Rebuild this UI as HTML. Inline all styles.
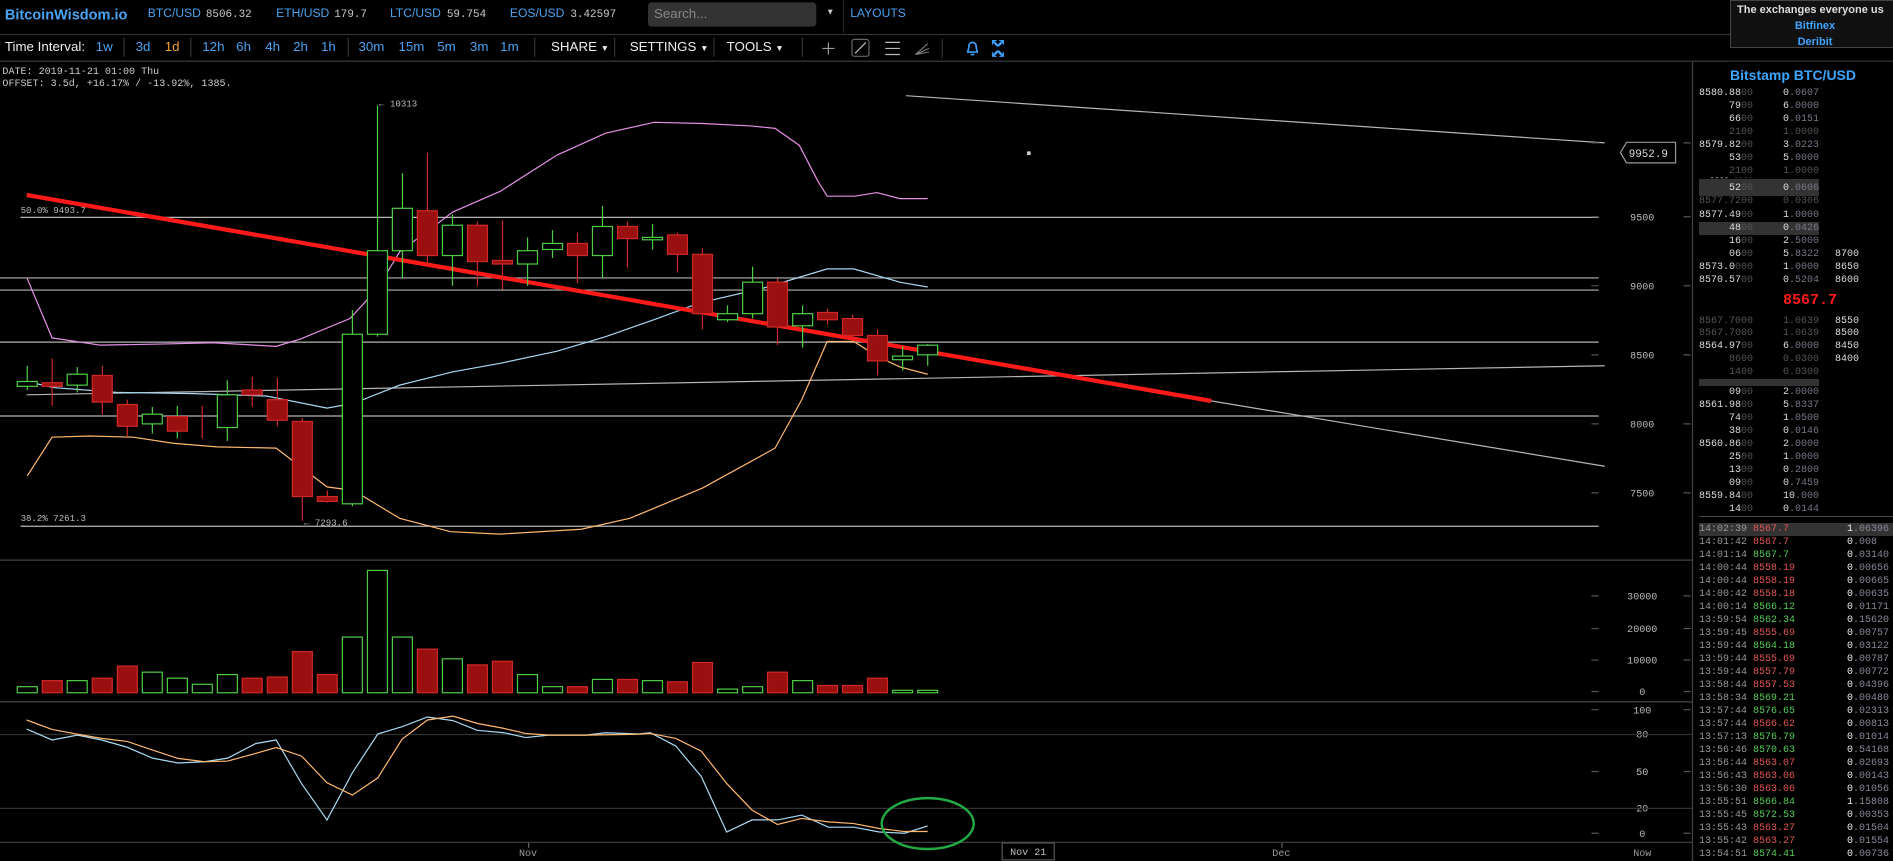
<!DOCTYPE html>
<html><head><meta charset="utf-8">
<style>
*{margin:0;padding:0;box-sizing:border-box}
html,body{width:1893px;height:861px;background:#000;overflow:hidden}
body{position:relative;font-family:"Liberation Sans",sans-serif;color:#ccc}
#L{position:absolute;left:0;top:0;width:1563px;height:711px;transform:scale(1.2111);transform-origin:0 0}
.a{position:absolute;white-space:nowrap}
.tb{font-size:11px;color:#4aa3f0;top:33px}
.mono{font-family:"Liberation Mono",monospace}
.sep{position:absolute;top:31px;width:1px;height:16px;background:#333}
#R{position:absolute;left:0;top:0;width:1893px;height:861px}
.r{position:absolute;font-family:"Liberation Mono",monospace;font-size:10px;line-height:13px;color:#ddd;white-space:pre;height:13px}
.p1{left:1699px;width:54px;text-align:right}
.p2{left:1753px;width:66px;text-align:right}
.p3{left:1835px}
.d{color:#555}.g{color:#778}
.tr{position:absolute;left:1699px;font-family:"Liberation Mono",monospace;font-size:10px;line-height:13px;white-space:pre;width:194px;height:13px}
.tr .t{color:#999;position:absolute;left:0}.tr .p{position:absolute;left:54px}.tr .q{position:absolute;left:148px;color:#889}
.rd{color:#e05555}.gr{color:#55cc55}
</style></head><body>
<div id="L">
<div class="a" style="left:4px;top:5px;font-size:12px;font-weight:bold;color:#4aa3f0">BitcoinWisdom.io</div>
<div class="a" style="left:122px;top:6px;font-size:10px;color:#4aa3f0">BTC/USD</div>
<div class="a mono" style="left:170px;top:7px;font-size:9px;color:#ccc">8506.32</div>
<div class="a" style="left:228px;top:6px;font-size:10px;color:#4aa3f0">ETH/USD</div>
<div class="a mono" style="left:276px;top:7px;font-size:9px;color:#ccc">179.7</div>
<div class="a" style="left:322px;top:6px;font-size:10px;color:#4aa3f0">LTC/USD</div>
<div class="a mono" style="left:369px;top:7px;font-size:9px;color:#ccc">59.754</div>
<div class="a" style="left:421px;top:6px;font-size:10px;color:#4aa3f0">EOS/USD</div>
<div class="a mono" style="left:471px;top:7px;font-size:9px;color:#ccc">3.42597</div>
<div class="a" style="left:535px;top:2px;width:139px;height:20px;background:#333;border-radius:3px;font-size:11px;color:#888;padding:4px 0 0 5px">Search...</div>
<div class="a" style="left:682px;top:7px;font-size:7px;color:#ccc">▼</div>
<div class="a" style="left:696px;top:0;width:1px;height:27px;background:#222"></div>
<div class="a" style="left:702px;top:6px;font-size:10px;color:#4aa3f0">LAYOUTS</div>
<div class="a" style="left:0;top:28px;width:1430px;height:1px;background:#333"></div>
<div class="a tb" style="left:4px;color:#eee">Time Interval:</div>
<div class="a tb" style="left:79px">1w</div>
<div class="sep" style="left:102px"></div>
<div class="a tb" style="left:112px">3d</div>
<div class="a tb" style="left:136px;color:#f0a030">1d</div>
<div class="sep" style="left:157px"></div>
<div class="a tb" style="left:167px">12h</div>
<div class="a tb" style="left:195px">6h</div>
<div class="a tb" style="left:219px">4h</div>
<div class="a tb" style="left:242px">2h</div>
<div class="a tb" style="left:265px">1h</div>
<div class="sep" style="left:287px"></div>
<div class="a tb" style="left:296px">30m</div>
<div class="a tb" style="left:329px">15m</div>
<div class="a tb" style="left:361px">5m</div>
<div class="a tb" style="left:388px">3m</div>
<div class="a tb" style="left:413px">1m</div>
<div class="sep" style="left:441px"></div>
<div class="a tb" style="left:455px;color:#eee">SHARE <span style="font-size:7px">▼</span></div>
<div class="sep" style="left:507px"></div>
<div class="a tb" style="left:520px;color:#eee">SETTINGS <span style="font-size:7px">▼</span></div>
<div class="sep" style="left:589px"></div>
<div class="a tb" style="left:600px;color:#eee">TOOLS <span style="font-size:7px">▼</span></div>
<div class="sep" style="left:662px"></div>
<svg class="a" style="left:670px;top:30px" width="170" height="20" viewBox="0 0 170 20">
<path d="M14 5v10M9 10h10" stroke="#999" stroke-width="1"/>
<rect x="33.5" y="2.5" width="14" height="14" rx="2" fill="none" stroke="#666"/>
<path d="M36 14l9-9" stroke="#bbb"/>
<path d="M61 5h12M61 10h12M61 15h12" stroke="#bbb"/>
<path d="M86 15l10-9M86 15l11-5M86 15l11-2" stroke="#888" stroke-width="0.8"/>
<path d="M108 2v16" stroke="#333"/>
<path d="M129 13c0-1 1-2 1-5a3 3 0 016 0c0 3 1 4 1 5zM131.5 15h3" stroke="#3a9cf5" fill="none" stroke-width="1.4"/>
<path d="M150 4l4 4M158 4l-4 4M150 16l4-4M158 16l-4-4" stroke="#3a9cf5" stroke-width="2"/>
<path d="M149 3h4v1h-3v3h-1zM159 3h-4v1h3v3h1zM149 17h4v-1h-3v-3h-1zM159 17h-4v-1h3v-3h1z" fill="#3a9cf5"/>
</svg>
<div class="a" style="left:0;top:50px;width:1563px;height:1px;background:#333"></div>
<div class="a mono" style="left:2px;top:55px;font-size:8.3px;color:#ccc">DATE: 2019-11-21 01:00 Thu</div>
<div class="a mono" style="left:2px;top:65px;font-size:8.3px;color:#ccc">OFFSET: 3.5d, +16.17% / -13.92%, 1385.</div>

<svg class="a" style="left:0;top:0" width="1563" height="711" viewBox="0 0 1563 711">
<g fill="none" stroke="#b5b5b5" stroke-width="1">
<path d="M17 179.5H1320"/>
<path d="M0 229.5H1320"/>
<path d="M0 239.5H1320"/>
<path d="M0 282.5H1320"/>
<path d="M0 343.5H1320"/>
<path d="M17 434.5H1320"/>
<path d="M22 326L1325 302"/>
<path d="M748 79L1325 118"/>
<path d="M1000 331L1325 385"/>
</g>
<g font-family="Liberation Mono,monospace" font-size="7.5" fill="#bbb">
<text x="17" y="176">50.0% 9493.7</text>
<text x="17" y="430">38.2% 7261.3</text>
<text x="251" y="434">← 7293.6</text>
<text x="313" y="88">← 10313</text>
</g>
<rect x="848" y="125" width="3" height="3" fill="#ccc"/>
<polyline fill="none" stroke="#e58fe5" stroke-width="1" points="22.5,230 43,279 83,285 137,284 176,283 228,286 248,280 289,263 311,239 330,208 374,175 413,158 460,128 500,110 540,101 580,102 620,104 640,106 660,120 675,149 683,162 706,162 724,159 743,164 766,164"/>
<polyline fill="none" stroke="#a8d8f0" stroke-width="1" points="22.5,315 44,320 96,324 160,325 220,327 270,337 292,333 330,318 374,307 413,300 460,290 500,278 540,264 578,250 630,238 683,222 705,222 743,233 766,237"/>
<polyline fill="none" stroke="#ffb870" stroke-width="1" points="22.5,393 43,361 74,360 110,361 143,366 179,369 228,370 270,402 292,405 330,428 372,439 413,441 480,437 520,428 580,403 640,370 662,330 683,282 705,282 724,294 743,303 766,309"/>
<path d="M22 161L1000 331" stroke="#ff1a1a" stroke-width="3.5"/>
<g stroke-width="1">
<g stroke="#4dcc44" fill="#000">
<path d="M22.5 302V322M63.8 303V324M125.8 336V358M146.4 335V362M187.7 314V364M291 256V418M311.7 87V278M332.3 143V230M373.6 177V236M435.6 196V236M456.2 190V213M497.5 170V230M538.8 185V206M600.7 252V266M621.4 220V263M662.7 252V287M745.3 286V306M766 284V302"/>
<rect x="14.25" y="315" width="16.5" height="4"/>
<rect x="55.5" y="309" width="16.5" height="9"/>
<rect x="117.5" y="342" width="16.5" height="8"/>
<path d="M138 354.5H155"/>
<rect x="179.5" y="326" width="16.5" height="27"/>
<rect x="282.7" y="276" width="16.5" height="140"/>
<rect x="303.4" y="207" width="16.5" height="69"/>
<rect x="324" y="172" width="16.5" height="35"/>
<rect x="365.3" y="186" width="16.5" height="25"/>
<rect x="427.3" y="207" width="16.5" height="11"/>
<rect x="448" y="201" width="16.5" height="5"/>
<rect x="489.2" y="187" width="16.5" height="24"/>
<rect x="530.5" y="196" width="16.5" height="2"/>
<rect x="592.5" y="259" width="16.5" height="5"/>
<rect x="613.2" y="233" width="16.5" height="26"/>
<rect x="654.5" y="259" width="16.5" height="10"/>
<rect x="737" y="294" width="16.5" height="3"/>
<rect x="757.7" y="285" width="16.5" height="8"/>
</g>
<g stroke="#d02828" fill="#9a1010">
<path d="M43.1 296V335M84.5 302V342M105.1 330V360M167 335V362M208.3 311V336M229 312V352M249.6 345V430M270.3 405V415M352.9 126V217M394.2 183V236M414.9 182V239M476.8 192V234M518.1 183V221M559.4 192V225M580 205V272M642 230V285M683.3 255V268M704 260V280M724.6 272V310"/>
<rect x="34.9" y="316" width="16.5" height="3"/>
<rect x="76.2" y="310" width="16.5" height="22"/>
<rect x="96.9" y="334" width="16.5" height="18"/>
<rect x="138.2" y="344" width="16.5" height="12"/>
<rect x="200" y="322" width="16.5" height="4"/>
<rect x="220.7" y="330" width="16.5" height="17"/>
<rect x="241.4" y="348" width="16.5" height="62"/>
<rect x="262" y="410" width="16.5" height="4"/>
<rect x="344.6" y="174" width="16.5" height="37"/>
<rect x="386" y="186" width="16.5" height="30"/>
<rect x="406.6" y="215" width="16.5" height="3"/>
<rect x="468.5" y="201" width="16.5" height="10"/>
<rect x="509.9" y="187" width="16.5" height="10"/>
<rect x="551.1" y="194" width="16.5" height="16"/>
<rect x="571.8" y="210" width="16.5" height="49"/>
<rect x="633.7" y="233" width="16.5" height="37"/>
<rect x="675" y="258" width="16.5" height="6"/>
<rect x="695.7" y="263" width="16.5" height="14"/>
<rect x="716.3" y="277" width="16.5" height="21"/>
</g>
</g>
<g font-family="Liberation Mono,monospace" font-size="8.3" fill="#bbb" text-anchor="middle">
<text x="1356" y="182">9500</text><text x="1356" y="239">9000</text><text x="1356" y="296">8500</text><text x="1356" y="353">8000</text><text x="1356" y="410">7500</text>
<text x="1356" y="495">30000</text><text x="1356" y="522">20000</text><text x="1356" y="548">10000</text><text x="1356" y="574">0</text>
<text x="1356" y="589">100</text><text x="1356" y="609">80</text><text x="1356" y="640">50</text><text x="1356" y="670">20</text><text x="1356" y="691">0</text>
</g>
<g stroke="#555"><path d="M1314 179h6M1390 179h6M1314 236h6M1390 236h6M1314 293h6M1390 293h6M1314 350h6M1390 350h6M1314 407h6M1390 407h6M1314 118h6M1390 118h6M1314 492h6M1390 492h6M1314 519h6M1390 519h6M1314 545h6M1390 545h6M1314 571h6M1390 571h6M1314 586h6M1390 586h6M1314 637h6M1390 637h6M1314 688h6M1390 688h6"/></g>
<path d="M1343 117.5H1383.5V134.5H1343L1338 126Z" fill="#000" stroke="#999"/>
<text x="1361" y="129.5" font-family="Liberation Mono,monospace" font-size="9" fill="#ddd" text-anchor="middle">9952.9</text>
<path d="M0 462.5H1397M0 579.5H1397M0 695.5H1397M1397.5 51V711" stroke="#444"/>
<path d="M0 606.5H1397M0 667.5H1397" stroke="#333"/>
<g stroke="#4dcc44" fill="#000">
<rect x="14.25" y="567" width="16.5" height="5"/><rect x="55.5" y="562" width="16.5" height="10"/><rect x="117.5" y="555" width="16.5" height="17"/><rect x="138.2" y="560" width="16.5" height="12"/><rect x="158.8" y="565" width="16.5" height="7"/><rect x="179.5" y="557" width="16.5" height="15"/><rect x="282.7" y="526" width="16.5" height="46"/><rect x="303.4" y="471" width="16.5" height="101"/><rect x="324" y="526" width="16.5" height="46"/><rect x="365.3" y="544" width="16.5" height="28"/><rect x="427.3" y="557" width="16.5" height="15"/><rect x="448" y="567" width="16.5" height="5"/><rect x="489.2" y="561" width="16.5" height="11"/><rect x="530.5" y="562" width="16.5" height="10"/><rect x="592.5" y="569" width="16.5" height="3"/><rect x="613.2" y="567" width="16.5" height="5"/><rect x="654.5" y="562" width="16.5" height="10"/><rect x="737" y="570" width="16.5" height="2"/><rect x="757.7" y="570" width="16.5" height="2"/>
</g>
<g stroke="#d02828" fill="#9a1010">
<rect x="34.9" y="562" width="16.5" height="10"/><rect x="76.2" y="560" width="16.5" height="12"/><rect x="96.9" y="550" width="16.5" height="22"/><rect x="200" y="560" width="16.5" height="12"/><rect x="220.7" y="559" width="16.5" height="13"/><rect x="241.4" y="538" width="16.5" height="34"/><rect x="262" y="557" width="16.5" height="15"/><rect x="344.6" y="536" width="16.5" height="36"/><rect x="386" y="549" width="16.5" height="23"/><rect x="406.6" y="546" width="16.5" height="26"/><rect x="468.5" y="567" width="16.5" height="5"/><rect x="509.9" y="561" width="16.5" height="11"/><rect x="551.1" y="563" width="16.5" height="9"/><rect x="571.8" y="547" width="16.5" height="25"/><rect x="633.7" y="555" width="16.5" height="17"/><rect x="675" y="566" width="16.5" height="6"/><rect x="695.7" y="566" width="16.5" height="6"/><rect x="716.3" y="560" width="16.5" height="12"/>
</g>
<polyline fill="none" stroke="#a8d8f0" points="22,602 43,611 64,607 84,611 105,617 126,626 147,630 169,629 188,626 211,614 228,611 249,647 270,677 291,638 312,606 332,600 353,592 374,595 394,603 416,605 434,609 453,607 484,607 500,605 527,606 537,605 558,616 579,641 600,687 621,677 642,677 662,673 684,683 705,683 726,687 747,688 766,682"/>
<polyline fill="none" stroke="#ffb870" points="22,594.5 43,602.3 64,606.2 84,609.7 105,612.2 126,619.3 147,626.2 169,629 188,628.4 211,622.1 228,617.2 249,624.3 270,646.3 291,656.5 312,642.2 332,610.3 353,594.5 374,591.3 394,597.3 416,601.4 434,605.6 453,607 484,607 527,606.2 537,605.6 558,609.7 579,620.2 600,646.9 621,668.9 642,680.8 662,675.8 684,678.6 705,680 726,684.1 747,686.6 766,686.6"/>
<ellipse cx="766" cy="680" rx="38" ry="21" fill="none" stroke="#22aa44" stroke-width="2"/>
<g font-family="Liberation Mono,monospace" font-size="8.3" fill="#999" text-anchor="middle">
<text x="436" y="707">Nov</text><text x="1058" y="707">Dec</text><text x="1356" y="707">Now</text>
</g>
<path d="M436.5 696v4M1058.5 696v4" stroke="#666"/>
<rect x="827.5" y="696" width="43" height="14" fill="#000" stroke="#555"/>
<text x="849" y="706" font-family="Liberation Mono,monospace" font-size="8.3" fill="#bbb" text-anchor="middle">Nov 21</text>
</svg>
</div>

<div id="R">
<div style="position:absolute;left:1730px;top:0;width:170px;height:48px;background:#111;border:1px solid #444;text-align:center;font-weight:bold;font-size:11px;line-height:16px;padding-top:1px;white-space:nowrap;overflow:hidden">
<div style="color:#ddd;text-align:left;padding-left:6px">The exchanges everyone us</div><div style="color:#3ea5ff">Bitfinex</div><div style="color:#3ea5ff">Deribit</div></div>
<div style="position:absolute;left:0;top:61px;width:1730px;height:1px;background:#333"></div>
<div style="position:absolute;left:1692px;top:62px;width:1px;height:799px;background:#444"></div>
<div style="position:absolute;left:1730px;top:67px;font-weight:bold;font-size:14px;color:#3ea5ff;white-space:nowrap">Bitstamp BTC/USD</div>
<div style="position:absolute;left:1699px;top:179px;width:120px;height:17px;background:#333"></div>
<div style="position:absolute;left:1699px;top:222px;width:120px;height:13px;background:#333"></div>
<div style="position:absolute;left:1699px;top:379px;width:120px;height:7px;background:#333"></div>
<div style="position:absolute;left:1692px;top:88px;width:201px;height:426px;overflow:hidden">
<div style="position:absolute;left:-1692px;top:-88px;width:1893px;height:600px">
<div class="r p1" style="top:87px">8580.88<span class="d">00</span></div><div class="r p2" style="top:87px">0<span class="g">.0607</span></div>
<div class="r p1" style="top:100px">79<span class="d">00</span></div><div class="r p2" style="top:100px">6<span class="g">.0000</span></div>
<div class="r p1" style="top:113px">66<span class="d">00</span></div><div class="r p2" style="top:113px">0<span class="g">.0151</span></div>
<div class="r p1 d" style="top:126px">2100</div><div class="r p2 d" style="top:126px">1.0000</div>
<div class="r p1" style="top:139px">8579.82<span class="d">00</span></div><div class="r p2" style="top:139px">3<span class="g">.0223</span></div>
<div class="r p1" style="top:152px">53<span class="d">00</span></div><div class="r p2" style="top:152px">5<span class="g">.0000</span></div>
<div class="r p1 d" style="top:165px">2100</div><div class="r p2 d" style="top:165px">1.0000</div>
<div class="r p1" style="top:175px;font-size:8px;height:8px;line-height:8px;overflow:hidden">----&nbsp;<span class="d">----</span></div>
<div class="r p1" style="top:182px">52<span class="d">00</span></div><div class="r p2" style="top:182px">0<span class="g">.0606</span></div>
<div class="r p1 d" style="top:195px">8577.7200</div><div class="r p2 d" style="top:195px">0.0306</div>
<div class="r p1" style="top:209px">8577.49<span class="d">00</span></div><div class="r p2" style="top:209px">1<span class="g">.0000</span></div>
<div class="r p1" style="top:222px">48<span class="d">00</span></div><div class="r p2" style="top:222px">0<span class="g">.0426</span></div>
<div class="r p1" style="top:235px">16<span class="d">00</span></div><div class="r p2" style="top:235px">2<span class="g">.5000</span></div>
<div class="r p1" style="top:248px">06<span class="d">00</span></div><div class="r p2" style="top:248px">5<span class="g">.8322</span></div><div class="r p3" style="top:248px">8700</div>
<div class="r p1" style="top:261px">8573.0<span class="d">000</span></div><div class="r p2" style="top:261px">1<span class="g">.0000</span></div><div class="r p3" style="top:261px">8650</div>
<div class="r p1" style="top:274px">8570.57<span class="d">00</span></div><div class="r p2" style="top:274px">0<span class="g">.5204</span></div><div class="r p3" style="top:274px">8600</div>
<div style="position:absolute;left:1783px;top:292px;font-family:'Liberation Mono',monospace;font-weight:bold;font-size:15px;color:#ff1a1a">8567.7</div>
<div class="r p1 d" style="top:315px">8567.7000</div><div class="r p2 d" style="top:315px">1.0639</div><div class="r p3" style="top:315px">8550</div>
<div class="r p1 d" style="top:327px">8567.7000</div><div class="r p2 d" style="top:327px">1.0639</div><div class="r p3" style="top:327px">8500</div>
<div class="r p1" style="top:340px">8564.97<span class="d">00</span></div><div class="r p2" style="top:340px">6<span class="g">.0000</span></div><div class="r p3" style="top:340px">8450</div>
<div class="r p1 d" style="top:353px">8600</div><div class="r p2 d" style="top:353px">0.0300</div><div class="r p3" style="top:353px">8400</div>
<div class="r p1 d" style="top:366px">1400</div><div class="r p2 d" style="top:366px">0.0300</div>
<div class="r p1" style="top:386px">09<span class="d">00</span></div><div class="r p2" style="top:386px">2<span class="g">.0000</span></div>
<div class="r p1" style="top:399px">8561.98<span class="d">00</span></div><div class="r p2" style="top:399px">5<span class="g">.8337</span></div>
<div class="r p1" style="top:412px">74<span class="d">00</span></div><div class="r p2" style="top:412px">1<span class="g">.0500</span></div>
<div class="r p1" style="top:425px">38<span class="d">00</span></div><div class="r p2" style="top:425px">0<span class="g">.0146</span></div>
<div class="r p1" style="top:438px">8560.86<span class="d">00</span></div><div class="r p2" style="top:438px">2<span class="g">.0000</span></div>
<div class="r p1" style="top:451px">25<span class="d">00</span></div><div class="r p2" style="top:451px">1<span class="g">.0000</span></div>
<div class="r p1" style="top:464px">13<span class="d">00</span></div><div class="r p2" style="top:464px">0<span class="g">.2800</span></div>
<div class="r p1" style="top:477px">09<span class="d">00</span></div><div class="r p2" style="top:477px">0<span class="g">.7459</span></div>
<div class="r p1" style="top:490px">8559.84<span class="d">00</span></div><div class="r p2" style="top:490px">10<span class="g">.000</span></div>
<div class="r p1" style="top:503px">14<span class="d">00</span></div><div class="r p2" style="top:503px">0<span class="g">.0144</span></div>
</div></div>
<div style="position:absolute;left:1699px;top:516px;width:194px;height:1px;background:#444"></div>
<div style="position:absolute;left:1699px;top:523px;width:194px;height:13px;background:#333"></div>
<div class="tr" style="top:523px"><span class="t">14:02:39</span><span class="p rd">8567.7</span><span class="q"><span style="color:#eee">1</span>.06396</span></div>
<div class="tr" style="top:536px"><span class="t">14:01:42</span><span class="p rd">8567.7</span><span class="q"><span style="color:#eee">0</span>.008</span></div>
<div class="tr" style="top:549px"><span class="t">14:01:14</span><span class="p gr">8567.7</span><span class="q"><span style="color:#eee">0</span>.03140</span></div>
<div class="tr" style="top:562px"><span class="t">14:00:44</span><span class="p rd">8558.19</span><span class="q"><span style="color:#eee">0</span>.00656</span></div>
<div class="tr" style="top:575px"><span class="t">14:00:44</span><span class="p rd">8558.19</span><span class="q"><span style="color:#eee">0</span>.00665</span></div>
<div class="tr" style="top:588px"><span class="t">14:00:42</span><span class="p rd">8558.18</span><span class="q"><span style="color:#eee">0</span>.00635</span></div>
<div class="tr" style="top:601px"><span class="t">14:00:14</span><span class="p gr">8566.12</span><span class="q"><span style="color:#eee">0</span>.01171</span></div>
<div class="tr" style="top:614px"><span class="t">13:59:54</span><span class="p gr">8562.34</span><span class="q"><span style="color:#eee">0</span>.15620</span></div>
<div class="tr" style="top:627px"><span class="t">13:59:45</span><span class="p rd">8555.69</span><span class="q"><span style="color:#eee">0</span>.00757</span></div>
<div class="tr" style="top:640px"><span class="t">13:59:44</span><span class="p gr">8564.18</span><span class="q"><span style="color:#eee">0</span>.03122</span></div>
<div class="tr" style="top:653px"><span class="t">13:59:44</span><span class="p rd">8555.69</span><span class="q"><span style="color:#eee">0</span>.00787</span></div>
<div class="tr" style="top:666px"><span class="t">13:59:44</span><span class="p rd">8557.79</span><span class="q"><span style="color:#eee">0</span>.00772</span></div>
<div class="tr" style="top:679px"><span class="t">13:58:44</span><span class="p rd">8557.53</span><span class="q"><span style="color:#eee">0</span>.04396</span></div>
<div class="tr" style="top:692px"><span class="t">13:58:34</span><span class="p gr">8569.21</span><span class="q"><span style="color:#eee">0</span>.00480</span></div>
<div class="tr" style="top:705px"><span class="t">13:57:44</span><span class="p gr">8576.65</span><span class="q"><span style="color:#eee">0</span>.02313</span></div>
<div class="tr" style="top:718px"><span class="t">13:57:44</span><span class="p rd">8566.62</span><span class="q"><span style="color:#eee">0</span>.00813</span></div>
<div class="tr" style="top:731px"><span class="t">13:57:13</span><span class="p gr">8576.79</span><span class="q"><span style="color:#eee">0</span>.01014</span></div>
<div class="tr" style="top:744px"><span class="t">13:56:46</span><span class="p gr">8570.63</span><span class="q"><span style="color:#eee">0</span>.54168</span></div>
<div class="tr" style="top:757px"><span class="t">13:56:44</span><span class="p rd">8563.07</span><span class="q"><span style="color:#eee">0</span>.02693</span></div>
<div class="tr" style="top:770px"><span class="t">13:56:43</span><span class="p rd">8563.06</span><span class="q"><span style="color:#eee">0</span>.00143</span></div>
<div class="tr" style="top:783px"><span class="t">13:56:30</span><span class="p rd">8563.06</span><span class="q"><span style="color:#eee">0</span>.01056</span></div>
<div class="tr" style="top:796px"><span class="t">13:55:51</span><span class="p gr">8566.84</span><span class="q"><span style="color:#eee">1</span>.15808</span></div>
<div class="tr" style="top:809px"><span class="t">13:55:45</span><span class="p gr">8572.53</span><span class="q"><span style="color:#eee">0</span>.00353</span></div>
<div class="tr" style="top:822px"><span class="t">13:55:43</span><span class="p rd">8563.27</span><span class="q"><span style="color:#eee">0</span>.01504</span></div>
<div class="tr" style="top:835px"><span class="t">13:55:42</span><span class="p rd">8563.27</span><span class="q"><span style="color:#eee">0</span>.01554</span></div>
<div class="tr" style="top:848px"><span class="t">13:54:51</span><span class="p gr">8574.41</span><span class="q"><span style="color:#eee">0</span>.00736</span></div>
</div>
</body></html>
